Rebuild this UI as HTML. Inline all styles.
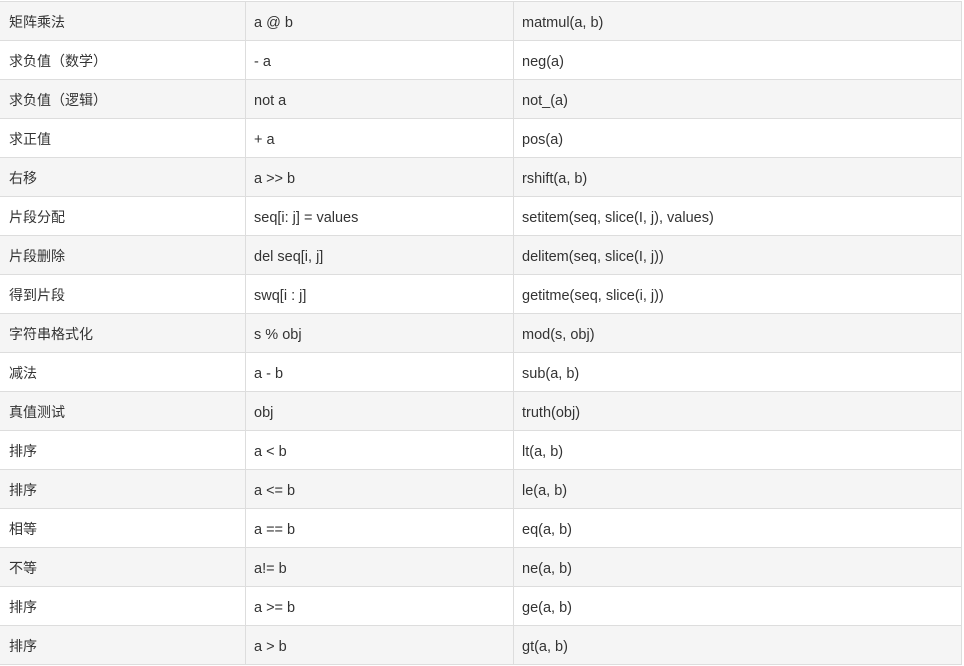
<!DOCTYPE html>
<html><head><meta charset="utf-8"><style>
*{margin:0;padding:0;box-sizing:border-box}
body{width:964px;height:666px;background:#fff;position:relative;overflow:hidden;font-family:"Liberation Sans","Noto Sans CJK SC",sans-serif;font-size:14.5px;color:#333}
.t{position:absolute;left:0;top:1px;width:962px;border-top:1px solid #ddd;border-right:1px solid #ddd}
.r{display:flex;height:39px;border-bottom:1px solid #ddd}
.r:nth-child(odd){background:#f5f5f5}
.r div{display:flex;align-items:center;height:38px;white-space:nowrap;padding-left:8px;line-height:18px;padding-top:3px}
.r div:nth-child(1){width:245px;padding-left:9px;font-size:14px;padding-top:1px}
.r div:nth-child(2){width:268px;border-left:1px solid #ddd}
.r div:nth-child(3){flex:1;border-left:1px solid #ddd}
</style></head><body>
<div class="t">
<div class="r"><div>矩阵乘法</div><div>a @ b</div><div>matmul(a, b)</div></div>
<div class="r"><div>求负值（数学）</div><div>- a</div><div>neg(a)</div></div>
<div class="r"><div>求负值（逻辑）</div><div>not a</div><div>not_(a)</div></div>
<div class="r"><div>求正值</div><div>+ a</div><div>pos(a)</div></div>
<div class="r"><div>右移</div><div>a &gt;&gt; b</div><div>rshift(a, b)</div></div>
<div class="r"><div>片段分配</div><div>seq[i: j] = values</div><div>setitem(seq, slice(I, j), values)</div></div>
<div class="r"><div>片段删除</div><div>del seq[i, j]</div><div>delitem(seq, slice(I, j))</div></div>
<div class="r"><div>得到片段</div><div>swq[i : j]</div><div>getitme(seq, slice(i, j))</div></div>
<div class="r"><div>字符串格式化</div><div>s % obj</div><div>mod(s, obj)</div></div>
<div class="r"><div>减法</div><div>a - b</div><div>sub(a, b)</div></div>
<div class="r"><div>真值测试</div><div>obj</div><div>truth(obj)</div></div>
<div class="r"><div>排序</div><div>a &lt; b</div><div>lt(a, b)</div></div>
<div class="r"><div>排序</div><div>a &lt;= b</div><div>le(a, b)</div></div>
<div class="r"><div>相等</div><div>a == b</div><div>eq(a, b)</div></div>
<div class="r"><div>不等</div><div>a!= b</div><div>ne(a, b)</div></div>
<div class="r"><div>排序</div><div>a &gt;= b</div><div>ge(a, b)</div></div>
<div class="r"><div>排序</div><div>a &gt; b</div><div>gt(a, b)</div></div>
</div>
</body></html>
